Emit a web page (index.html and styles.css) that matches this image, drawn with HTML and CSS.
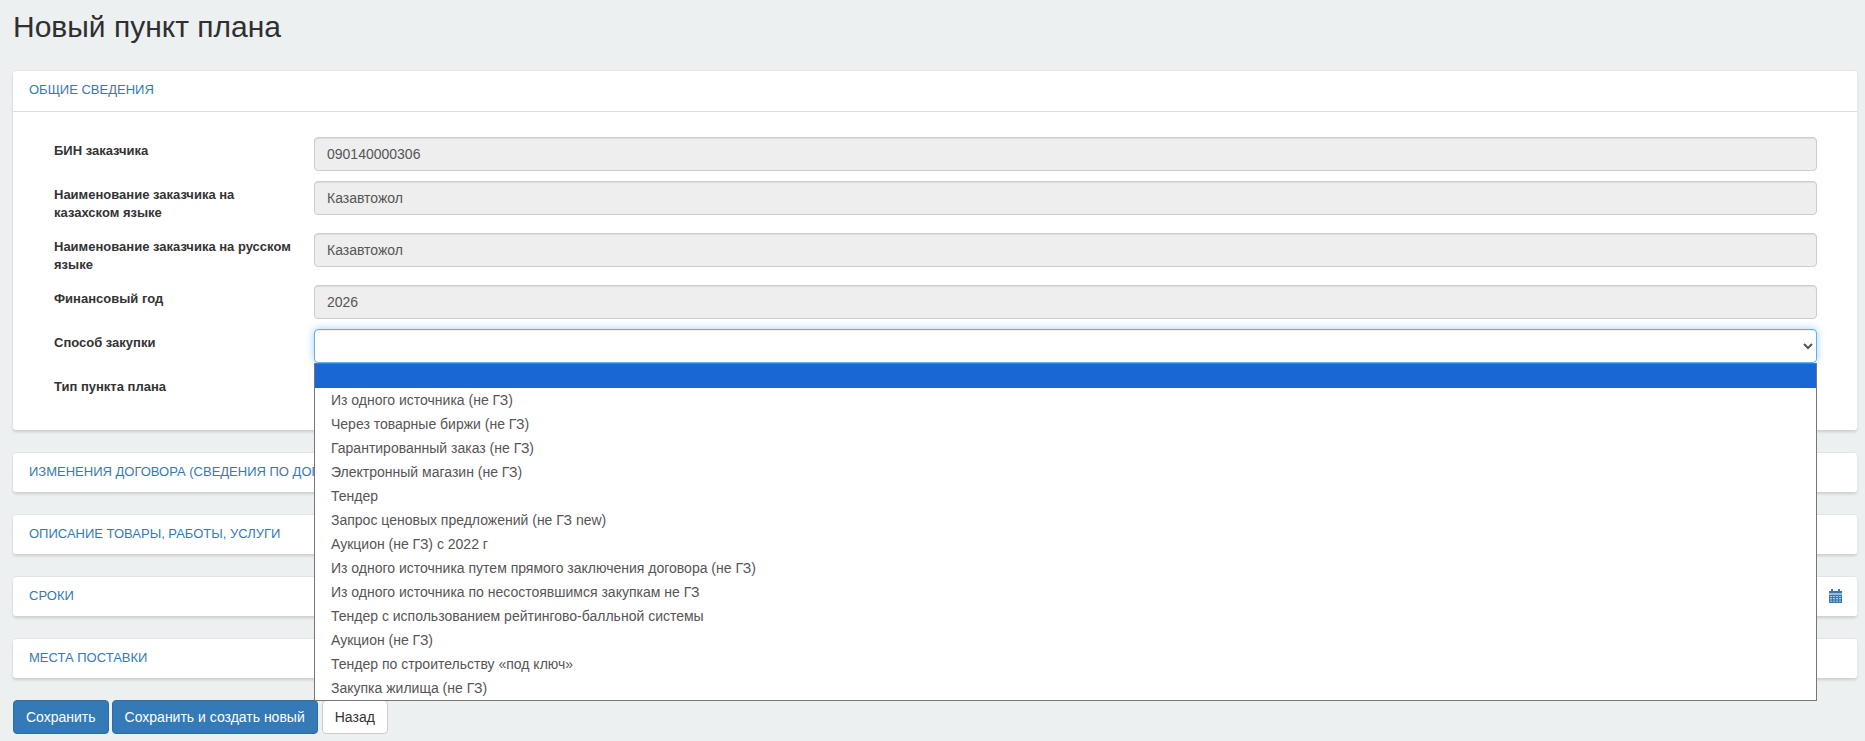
FILE: index.html
```html
<!DOCTYPE html>
<html lang="ru">
<head>
<meta charset="utf-8">
<title>Новый пункт плана</title>
<link rel="stylesheet" href="styles.css">
</head>
<body>
<h1 class="title">Новый пункт плана</h1>
<section class="panel">
  <div class="panel-head panel-head-open"><span class="panel-title">ОБЩИЕ СВЕДЕНИЯ</span></div>
  <div class="panel-body">
    <div class="row"><label class="label">БИН заказчика</label><div class="control"><input class="input" disabled value="090140000306"></div></div>
    <div class="row"><label class="label">Наименование заказчика на казахском языке</label><div class="control"><input class="input" disabled value="Казавтожол"></div></div>
    <div class="row"><label class="label">Наименование заказчика на русском языке</label><div class="control"><input class="input" disabled value="Казавтожол"></div></div>
    <div class="row"><label class="label">Финансовый год</label><div class="control"><input class="input" disabled value="2026"></div></div>
    <div class="row"><label class="label">Способ закупки</label>
      <div class="control">
        <select class="input select-focus"><option></option></select>
        <ul class="dropdown">
          <li class="option option-active">&nbsp;</li>
          <li class="option">Из одного источника (не ГЗ)</li>
          <li class="option">Через товарные биржи (не ГЗ)</li>
          <li class="option">Гарантированный заказ (не ГЗ)</li>
          <li class="option">Электронный магазин (не ГЗ)</li>
          <li class="option">Тендер</li>
          <li class="option">Запрос ценовых предложений (не ГЗ new)</li>
          <li class="option">Аукцион (не ГЗ) с 2022 г</li>
          <li class="option">Из одного источника путем прямого заключения договора (не ГЗ)</li>
          <li class="option">Из одного источника по несостоявшимся закупкам не ГЗ</li>
          <li class="option">Тендер с использованием рейтингово-балльной системы</li>
          <li class="option">Аукцион (не ГЗ)</li>
          <li class="option">Тендер по строительству «под ключ»</li>
          <li class="option">Закупка жилища (не ГЗ)</li>
        </ul>
      </div>
    </div>
    <div class="row"><label class="label">Тип пункта плана</label><div class="control"><select class="input"><option></option></select></div></div>
  </div>
</section>
<section class="panel"><div class="panel-head"><span class="panel-title">ИЗМЕНЕНИЯ ДОГОВОРА (СВЕДЕНИЯ ПО ДОП</span></div></section>
<section class="panel"><div class="panel-head"><span class="panel-title">ОПИСАНИЕ ТОВАРЫ, РАБОТЫ, УСЛУГИ</span></div></section>
<section class="panel"><div class="panel-head panel-head-icon"><span class="panel-title">СРОКИ</span>
  <svg class="calendar" viewBox="0 0 13 14" aria-hidden="true"><path fill-rule="evenodd" d="M2 0h2v2h5V0h2v2h2v2.6H0V2h2zM0 5.4h13V14H0zM1.2 6.9v.9h1.6v-.9zm3 0v.9h1.6v-.9zm3 0v.9h1.6v-.9zm3 0v.9h1.6v-.9zM1.2 9.3v.9h1.6v-.9zm3 0v.9h1.6v-.9zm3 0v.9h1.6v-.9zm3 0v.9h1.6v-.9zM1.2 11.7v.9h1.6v-.9zm3 0v.9h1.6v-.9zm3 0v.9h1.6v-.9zm3 0v.9h1.6v-.9z"/></svg>
</div></section>
<section class="panel panel-last"><div class="panel-head"><span class="panel-title">МЕСТА ПОСТАВКИ</span></div></section>
<div class="actions">
  <button class="btn btn-primary">Сохранить</button>
  <button class="btn btn-primary">Сохранить и создать новый</button>
  <button class="btn btn-default">Назад</button>
</div>
</body>
</html>
```
FILE: styles.css
```css
* { box-sizing: border-box; }
html, body { margin: 0; }
body {
  background: #ecf0f1;
  color: #333;
  font-family: "Liberation Sans", Arial, sans-serif;
  font-size: 13px;
  padding: 12px 8px 8px 13px;
  height: 741px;
  overflow: hidden;
}
.title {
  margin: 0 0 30px;
  font-size: 30px;
  font-weight: 400;
  line-height: 29px;
  color: #2f2f2f;
}
.panel {
  background: #fff;
  border-radius: 3px;
  box-shadow: 0 -1px 0 #e2e4e5, 1px 0 0 #e6e8e9, 0 2px 3px rgba(0, 0, 0, .14);
  margin-bottom: 23px;
}
.panel-last { margin-bottom: 22px; }
.panel-head {
  height: 39px;
  padding: 0 16px 2px;
  display: flex;
  align-items: center;
  justify-content: space-between;
}
.panel-head-open { border-bottom: 1px solid #ddd; height: 41px; }
.panel-title { color: #337ab7; font-size: 13px; line-height: 18px; white-space: nowrap; }
.panel-head-icon { padding-right: 15px; }
.calendar { width: 13px; height: 14px; fill: #337ab7; }
.panel-body { padding: 25px 40px 13px 41px; }
.row { display: flex; margin-bottom: 10px; }
.label {
  width: 260px;
  flex: none;
  padding: 5px 15px 1px 0;
  font-weight: 700;
  font-size: 13px;
  line-height: 18px;
  color: #333;
}
.control { position: relative; flex: 1; min-width: 0; }
.input {
  display: block;
  width: 100%;
  height: 34px;
  padding: 6px 12px;
  border: 1px solid #ccc;
  border-radius: 4px;
  background: #fff;
  color: #555;
  font-family: inherit;
  font-size: 14px;
  box-shadow: inset 0 1px 1px rgba(0, 0, 0, .075);
}
.input:disabled { background: #eee; opacity: 1; color: #555; }
.select-focus {
  border-color: #66afe9;
  box-shadow: inset 0 1px 1px rgba(0, 0, 0, .075), 0 0 8px rgba(102, 175, 233, .6);
}
.dropdown {
  position: absolute;
  z-index: 5;
  top: 34px;
  left: 0;
  right: 0;
  margin: 0;
  padding: 0;
  list-style: none;
  background: #fff;
  border: 1px solid #767676;
}
.option {
  height: 24px;
  line-height: 24px;
  padding-left: 16px;
  font-size: 14px;
  color: #555;
  white-space: nowrap;
}
.option-active { background: #1967d2; }
.actions { display: flex; gap: 3px; }
.btn {
  height: 34px;
  padding: 0 12px;
  border: 1px solid transparent;
  border-radius: 4px;
  font-family: inherit;
  font-size: 14px;
}
.btn-primary { background: #337ab7; border-color: #2e6da4; color: #fff; }
.btn-default { background: #fff; border-color: #ccc; color: #333; margin-left: 1px; }
```
